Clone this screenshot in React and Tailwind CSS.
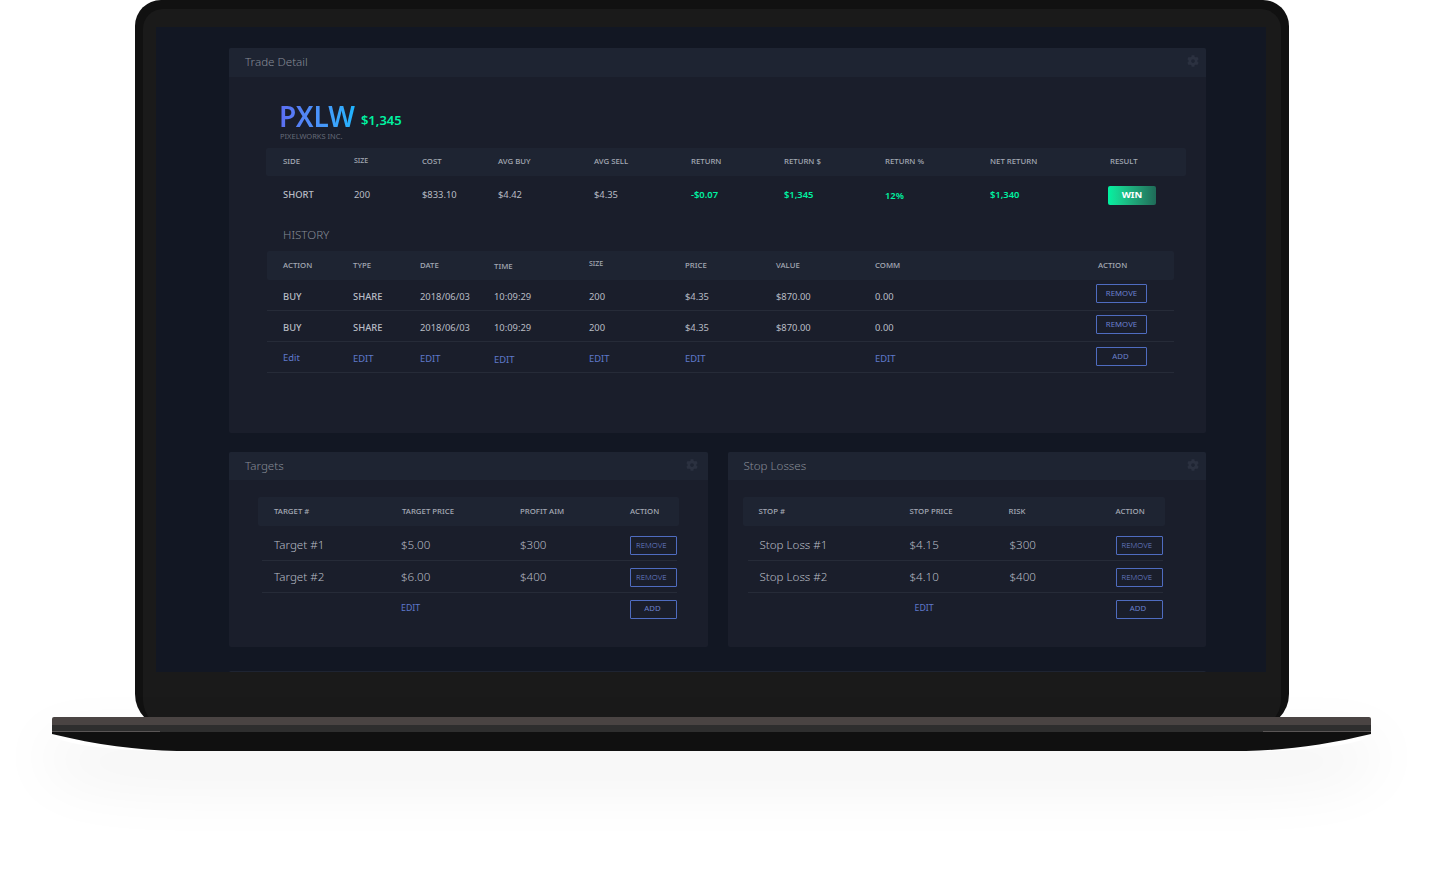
import { FaCog } from "react-icons/fa";

const tradeCols = "grid grid-cols-[71px_68px_76px_96px_97px_93px_101px_105px_120px_1fr]";
const historyCols = "grid grid-cols-[70px_67px_74px_95px_96px_91px_99px_221px_1fr]";
const targetCols = "grid grid-cols-[128px_118px_110px_1fr]";
const stopCols = "grid grid-cols-[151px_99px_107px_1fr]";

const history = [
  { action: "BUY", type: "SHARE", date: "2018/06/03", time: "10:09:29", size: "200", price: "$4.35", value: "$870.00", comm: "0.00" },
  { action: "BUY", type: "SHARE", date: "2018/06/03", time: "10:09:29", size: "200", price: "$4.35", value: "$870.00", comm: "0.00" },
];

const targets = [
  { name: "Target #1", price: "$5.00", aim: "$300" },
  { name: "Target #2", price: "$6.00", aim: "$400" },
];

const stops = [
  { name: "Stop Loss #1", price: "$4.15", aim: "$300" },
  { name: "Stop Loss #2", price: "$4.10", aim: "$400" },
];

const OutlineButton = ({ children, className = "" }) => (
  <button className={`h-[19px] border border-[#4f6cc0] rounded-[1px] text-[7.8px] leading-none text-[#6a80cc] ${className}`}>
    {children}
  </button>
);

const PanelHeader = ({ title, className = "h-[29px] pr-[7px]" }) => (
  <div className={`bg-[#1e2432] flex items-center justify-between pl-4 pb-px rounded-t-[2px] ${className}`}>
    <span className="text-[11.6px] font-light text-[#868b96]">{title}</span>
    <FaCog className="size-3 text-[#2b3140] -mt-0.5" />
  </div>
);

const LevelTable = ({ title, cols, heads, rows, editClass, headClass, rowClass, btnClass, gearClass }) => (
  <div className="flex-1 h-[195px] bg-[#1a1e2b] rounded-[2px]">
    <PanelHeader title={title} className={`h-7 ${gearClass}`} />
    <div className={headClass}>
      <div className={`${cols} h-[29px] w-full items-center bg-[#1e2432] rounded-[2px] pl-4 text-[7.8px] font-medium text-[#a4a9b4]`}>
        {heads.map((head) => (
          <span key={head}>{head}</span>
        ))}
      </div>
      <div className={rowClass}>
        {rows.map((row) => (
          <div key={row.name} className={`${cols} h-8 first:h-[35px] first:pt-[3px] items-center border-b border-[#262b38] pl-3 text-[11.6px] font-light text-[#b8bcc4]`}>
            <span>{row.name}</span>
            <span className="-ml-px">{row.price}</span>
            <span>{row.aim}</span>
            <OutlineButton className={`w-[47px] mt-0.5 text-left pl-[5px] ${btnClass}`}>REMOVE</OutlineButton>
          </div>
        ))}
        <div className={`${cols} h-8 items-center pl-3 text-[8.8px] text-[#5f79cc]`}>
          <span />
          <span className={editClass}>EDIT</span>
          <span />
          <OutlineButton className={`w-[47px] pr-0.5 ${btnClass}`}>ADD</OutlineButton>
        </div>
      </div>
    </div>
  </div>
);

const App = () => {
  return (
    <div className="relative w-[1437px] h-[880px] overflow-hidden bg-white font-['Noto_Sans',sans-serif]">
      {/* Lid */}
      <div className="ml-[135px] w-[1154px] h-[728px] bg-[#111111] rounded-t-[26px] rounded-b-[34px] pt-[9px] px-2">
        <div className="h-[719px] bg-[#1a1a1a] rounded-t-[20px] rounded-b-[28px] pt-[18px] pl-[13px] pr-[15px]">
          <div className="h-[645px] overflow-hidden bg-[#121723] pt-[21px] pl-[73px]">
            <div className="w-[977px]">
              {/* Trade detail */}
              <div className="h-[385px] bg-[#1a1e2b] rounded-[2px]">
                <PanelHeader title="Trade Detail" />
                <div className="pt-[25px] pl-[37px]">
                  <div className="pl-[14px]">
                    <div className="flex h-[29px] items-center">
                      <span className="-ml-px text-[28px] leading-[29px] font-semibold bg-linear-to-r from-[#5c6df2] to-[#1cb5ff] bg-clip-text text-transparent">
                        PXLW
                      </span>
                      <span className="ml-1.5 mt-[9px] text-[13px] font-semibold text-[#00f2a1]">$1,345</span>
                    </div>
                    <div className="h-[10px] text-[7.5px] leading-[10px] text-[#666b78]">PIXELWORKS INC.</div>
                  </div>

                  <div className="mt-[7px] w-[920px]">
                    <div className={`${tradeCols} h-7 items-center bg-[#1e2432] rounded-[2px] pl-[17px] text-[7.8px] font-medium text-[#a4a9b4]`}>
                      <span>SIDE</span>
                      <span className="text-[7px] -translate-y-px">SIZE</span>
                      <span>COST</span>
                      <span>AVG BUY</span>
                      <span>AVG SELL</span>
                      <span>RETURN</span>
                      <span>RETURN $</span>
                      <span>RETURN %</span>
                      <span>NET RETURN</span>
                      <span>RESULT</span>
                    </div>
                    <div className={`${tradeCols} h-[38px] items-center pl-[17px] text-[9.4px] text-[#b8bcc4]`}>
                      <span className="font-medium">SHORT</span>
                      <span>200</span>
                      <span>$833.10</span>
                      <span>$4.42</span>
                      <span>$4.35</span>
                      <span className="font-semibold text-[#00f2a1]">-$0.07</span>
                      <span className="font-semibold text-[#00f2a1]">$1,345</span>
                      <span className="font-semibold text-[#00f2a1] translate-y-px">12%</span>
                      <span className="font-semibold text-[#00f2a1]">$1,340</span>
                      <span className="-ml-0.5 w-12 h-[19px] flex items-center justify-center rounded-[2px] bg-linear-to-r from-[#00f2a1] to-[#1f6b58] text-[9.5px] font-bold text-white">
                        WIN
                      </span>
                    </div>
                  </div>

                  <div className="mt-[11px] h-5 pl-[17px] text-[11.6px] leading-5 font-light text-[#868b96]">HISTORY</div>

                  <div className="mt-1.5 ml-px w-[907px]">
                    <div className={`${historyCols} h-[29px] items-center bg-[#1e2432] rounded-[2px] pl-4 text-[7.8px] font-medium text-[#a4a9b4]`}>
                      <span>ACTION</span>
                      <span>TYPE</span>
                      <span>DATE</span>
                      <span className="translate-y-px">TIME</span>
                      <span className="text-[7px] -translate-y-px">SIZE</span>
                      <span>PRICE</span>
                      <span>VALUE</span>
                      <span>COMM</span>
                      <span className="pl-0.5">ACTION</span>
                    </div>
                    {history.map((row, i) => (
                      <div key={i} className={`${historyCols} h-[31px] first:h-[30px] pt-1 items-center border-b border-[#262b38] pl-4 text-[9.4px] text-[#b8bcc4]`}>
                        <span className="font-medium">{row.action}</span>
                        <span className="font-medium">{row.type}</span>
                        <span>{row.date}</span>
                        <span>{row.time}</span>
                        <span>{row.size}</span>
                        <span>{row.price}</span>
                        <span>{row.value}</span>
                        <span>{row.comm}</span>
                        <OutlineButton className="w-[51px] -mt-[7px]">REMOVE</OutlineButton>
                      </div>
                    ))}
                    <div className={`${historyCols} h-[31px] pt-1 items-center border-b border-[#262b38] pl-4 text-[9.4px] text-[#5f79cc]`}>
                      <span className="-translate-y-px">Edit</span>
                      <span>EDIT</span>
                      <span>EDIT</span>
                      <span className="translate-y-px">EDIT</span>
                      <span>EDIT</span>
                      <span>EDIT</span>
                      <span />
                      <span>EDIT</span>
                      <OutlineButton className="w-[51px] -mt-[5px] pr-0.5">ADD</OutlineButton>
                    </div>
                  </div>
                </div>
              </div>

              {/* Targets + stop losses */}
              <div className="mt-[19px] flex gap-5">
                <LevelTable
                  title="Targets"
                  cols={targetCols}
                  heads={["TARGET #", "TARGET PRICE", "PROFIT AIM", "ACTION"]}
                  rows={targets}
                  editClass="-ml-px"
                  headClass="pt-[17px] pl-[29px] w-[450px]"
                  rowClass="ml-1 w-[415px]"
                  btnClass=""
                  gearClass="pr-2.5"
                />
                <LevelTable
                  title="Stop Losses"
                  cols={stopCols}
                  heads={["STOP #", "STOP PRICE", "RISK", "ACTION"]}
                  rows={stops}
                  editClass="ml-1"
                  headClass="pt-[17px] pl-[15px] w-[437px]"
                  rowClass="ml-[5px] w-[415px]"
                  btnClass="-ml-px"
                  gearClass="pr-[7px]"
                />
              </div>

              <div className="mt-6 h-[29px] bg-[#1e2432] rounded-t-[2px]" />
            </div>
          </div>
        </div>
      </div>

      {/* Base */}
      <div className="relative -mt-[11px] ml-[52px] w-[1319px] rounded-b-[123px_18px] shadow-[0_30px_60px_8px_rgba(0,0,0,0.05)]">
        <div className="h-2 bg-[#4a4443] rounded-t-[2px]" />
        <div className="h-[7px] bg-[#2e2e2e] flex justify-between items-end">
          <div className="w-[108px] h-px bg-[#5a5656]" />
          <div className="w-[108px] h-px bg-[#5a5656]" />
        </div>
        <svg viewBox="0 0 1319 19" className="block w-[1319px] h-[19px]">
          <path d="M0 0 V2 C45 13 85 18 125 19 H1194 C1234 18 1274 13 1319 2 V0 Z" fill="#101010" />
        </svg>
      </div>
    </div>
  );
};

export default App;
